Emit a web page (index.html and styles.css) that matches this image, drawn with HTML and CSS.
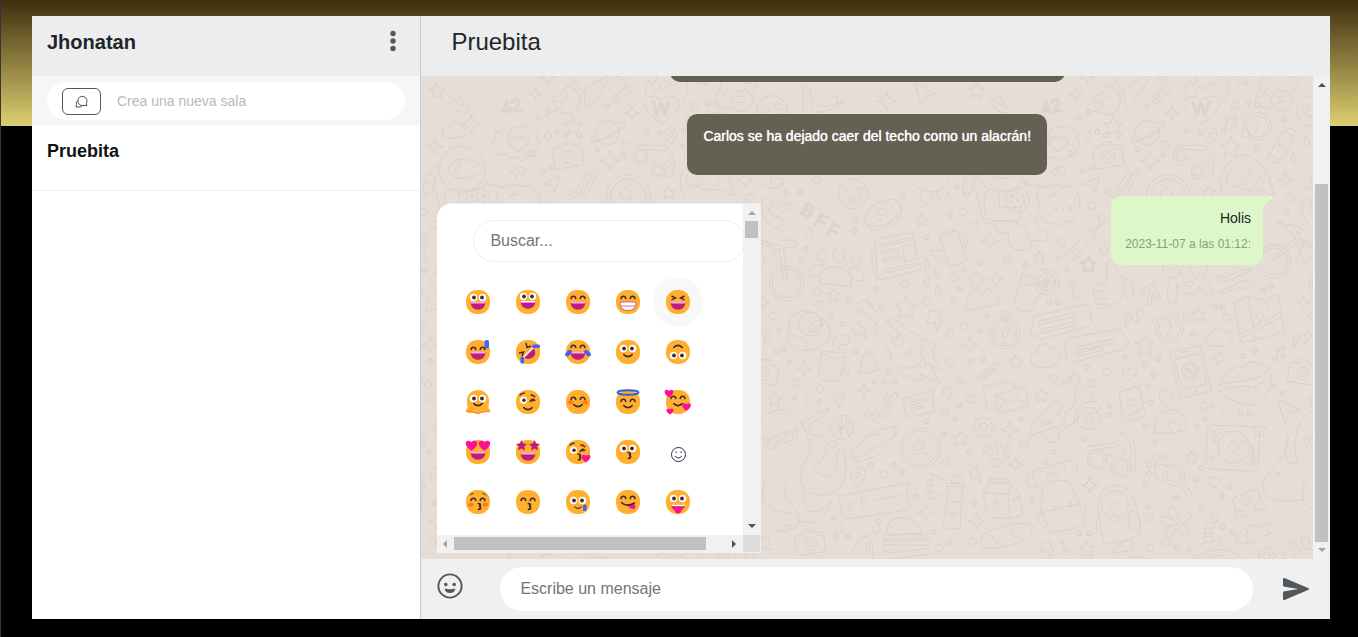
FILE: index.html
```html
<!DOCTYPE html>
<html lang="es">
<head>
<meta charset="utf-8">
<title>Pruebita</title>
<link rel="stylesheet" href="styles.css">
</head>
<body>
<svg class="defs" aria-hidden="true">
  <defs>
    <rect id="face" width="24" height="24" rx="11" fill="#ffb02e"/>
    <g id="eyes"><circle cx="7.5" cy="7.5" r="3.7" fill="#fff"/><circle cx="16.5" cy="7.5" r="3.7" fill="#fff"/><circle cx="8" cy="7.5" r="1.9" fill="#402a32"/><circle cx="16" cy="7.5" r="1.9" fill="#402a32"/></g>
    <g id="arcs" fill="none" stroke="#402a32" stroke-width="1.5" stroke-linecap="round"><path d="M5 8.6C5.4 5.4 9.4 5.4 9.8 8.6M14.2 8.6C14.6 5.4 18.6 5.4 19 8.6"/></g>
    <g id="laugh"><path d="M4.6 11.8H19.4C19.4 17 16.4 19.8 12 19.8S4.6 17 4.6 11.8Z" fill="#bb1d80"/><path d="M4.6 11.6H19.4V12.6Q19.2 13.4 18.4 13.4H5.6Q4.8 13.4 4.6 12.6Z" fill="#ffb5d5"/></g>
    <path id="smile" d="M7.8 14.6Q12 18.6 16.2 14.6" fill="none" stroke="#402a32" stroke-width="1.5" stroke-linecap="round"/>
    <path id="kiss" d="M12.4 12.6C14.8 12.4 14.8 15 13 15.2C15.2 15.4 15 18.4 12.6 18.4" fill="none" stroke="#402a32" stroke-width="1.8" stroke-linecap="round"/>
    <path id="heart" d="M0 4.4C-7 .2-4.6-5.6 0-2.2C4.6-5.6 7 .2 0 4.4Z" fill="#ff0f97"/>
    <path id="star5" d="M0-5.6L1.7-1.9 5.6-1.6 2.7 1.1 3.6 5 0 3-3.6 5-2.7 1.1-5.6-1.6-1.7-1.9Z" fill="#bb1d80"/>
    <g id="blush" fill="#ff7a1f"><ellipse cx="4.8" cy="12.2" rx="2.8" ry="2"/><ellipse cx="19.2" cy="12.2" rx="2.8" ry="2"/></g>
    <g id="wink"><circle cx="7.5" cy="10.2" r="3.6" fill="#fff"/><circle cx="8" cy="10.2" r="1.8" fill="#402a32"/><path d="M14.2 11.6Q16.2 7.6 18.8 10.4L15.8 10.8M4 5.2Q5.8 2.8 8.4 3.2M15 5Q17 4.8 18.8 6.8" fill="none" stroke="#402a32" stroke-width="1.3" stroke-linecap="round" stroke-linejoin="round"/></g>

    <g class="stamps">
    <path id="st" d="M0-18L6-6 18-5 9 4 12 17 0 11-12 17-9 4-18-5-6-6Z"/>
    <path id="sp" d="M0-26Q3-3 28 0Q3 3 0 26Q-3 3-28 0Q-3-3 0-26Z"/>
    <path id="ht" d="M0 18C-32-2-20-26 0-10C20-26 32-2 0 18Z"/>
    <path id="cl" d="M-30 22C-50 10-36-10-26-8C-22-36 12-34 16-18C36-28 48-2 34 10C24 28-20 26-30 22Z"/>
    <path id="bolt" d="M-12-24L14-28 8-8 20-8 4 28 2 4-18 4Z"/>
    <path id="pin" d="M0 22C-28-8-14-24 0-24S28-8 0 22ZM6-6A6 6 0 1 1-6-6A6 6 0 1 1 6-6"/>
    <g id="gear"><path d="M-6-32H6L9-23 19-29 27-20 22-11 32-6V6L23 9 28 20 19 28 10 22 6 32H-6L-9 23-19 28-28 19-22 9-32 6V-6L-22-9-28-19-19-28-9-23Z"/><circle r="12"/></g>
    <g id="cam" transform="rotate(-8)"><path d="M-36-24H-18L-14-36H14L18-24H38Q44-24 44-18V30Q44 36 38 36H-38Q-44 36-44 30V-18Q-44-24-36-24Z"/><circle cy="6" r="19"/><circle cy="6" r="9"/><path d="M26-14H36M-8-28H8"/></g>
    <g id="camb" transform="rotate(8)"><path d="M-36-24H-18L-14-36H14L18-24H38Q44-24 44-18V30Q44 36 38 36H-38Q-44 36-44 30V-18Q-44-24-36-24Z"/><circle cy="6" r="19"/><circle cy="6" r="9"/></g>
    <path id="quote" d="M0 0A10 10 0 1 1 12 8Q12 22-4 28Q4 18 2 10A10 10 0 0 1 0 0"/>
    <path id="checks" d="M-48 22L-36 14-18 28 22-38 34-32-14 42ZM8 26L46-44 56-38 14 36 4 30"/>
    <path id="note" d="M-8 16V-14L16-22V10M-8-6L16-14M-8 16A6 6 0 1 1-20 18A6 6 0 0 1-8 16M16 10A6 6 0 1 1 4 12A6 6 0 0 1 16 10"/>
    <path id="plane" d="M-26-28L38 4 12 10-4 34Z"/>
    </g>

    <g id="tile">
      <g transform="translate(339 104) scale(.3333)">
        <circle cx="280" cy="42" r="45"/><use href="#ht" transform="translate(260 42) scale(.6)"/><use href="#ht" transform="translate(300 34) scale(.6)"/><path d="M266 60Q284 52 302 52Q296 78 266 60"/>
        <g transform="rotate(-28 372 106)"><ellipse cx="372" cy="98" rx="58" ry="34"/><ellipse cx="372" cy="94" rx="17" ry="9"/><path d="M314 100Q316 142 342 134Q356 148 372 136Q390 148 404 134Q428 132 430 100M340 92l6 4M358 78l8-2M392 80l6 4M402 96l6-4M352 112l8 2M380 114l8-2"/></g>
        <path d="M8 58Q20 40 34 60Q40 72 28 82Q24 94 44 110Q58 104 74 126Q68 150 38 142Q-6 110 8 58ZM54 70Q64 60 74 76Q86 64 94 78Q94 90 68 96Q50 86 54 70"/>
        <path d="M345 186Q346 178 356 176L458 158 482 262Q484 270 474 272L362 300Q354 298 352 290ZM345 206L332 216 344 288Q348 298 362 300M362 192L454 172V180L364 200ZM362 214L414 204V212L364 222ZM370 238L420 226V234L372 246ZM376 268L468 250V258L378 278ZM428 200L462 194 468 236 436 246Z"/>
        <path d="M540 170L590 152 622 240Q600 256 570 260ZM540 170Q560 144 590 152M592 160Q616 146 622 176Q622 198 612 206M598 172Q612 166 612 178V194M546 214Q530 214 508 210Q530 246 556 248"/>
        <path d="M500 234Q516 258 500 270Q486 260 500 234M526 266Q546 286 534 294Q518 292 526 266M504 282Q516 308 500 322Q482 312 504 282M532 318Q550 342 536 352Q516 346 532 318"/>
        <circle cx="80" cy="310" r="52"/><circle cx="80" cy="310" r="43"/><path d="M64 180H98Q114 182 108 202H84L70 206 82 300Q78 312 70 304L58 206 0 262M0 188L56 212M0 178L62 198"/>
        <path d="M178 310Q182 258 226 260Q276 260 274 318ZM186 210Q200 216 196 236Q186 250 172 238Q166 216 186 210M238 202Q258 206 254 232Q246 256 224 244Q206 206 238 202M288 226Q304 232 300 252Q286 264 276 250Q272 230 288 226M146 286Q150 250 194 254L176 286ZM268 264Q312 260 314 304L280 300Z"/>
        <path d="M650 276Q670 282 668 306Q656 334 636 322Q616 290 650 276M618 392Q616 342 650 332L662 350 684 326Q712 340 716 372Z"/>
        <path d="M640 0L668 120Q676 136 702 130L706 150Q720 162 746 160Q740 210 780 212Q824 208 816 180Q874 190 864 160Q846 146 832 146Q826 104 812 106M684 30Q668 44 674 84Q676 120 700 122L776 124Q790 108 776 84L718 80V50Q712 22 684 30M690 10Q700 32 746 34Q790 34 806 0M706 124Q730 118 760 126Q804 140 802 170Q810 180 816 188"/>
        <circle cx="773" cy="60" r="36"/><path d="M773 38v1M755 48v1M791 48v1M752 66v1M794 66v1M764 80v1M783 80v1M773 60v1" stroke-width="8"/>
        <path d="M830 40L840 22 866 24 884 12 908 20 930 18 944 34 960 44 958 70 962 90 946 104 938 122 914 128 896 138 872 130 850 126 844 106 830 90 838 68ZM870 50q10-16 22-6q-10 0-22 6M878 86q4-16 12-6q0 14-6 14M910 82q4 8-2 16M930 78q8 6 4 14q-8 2-4-14M860 98q10 2 14 10M898 122l10 2M918 54v1M946 56v8"/>
        <path d="M918 224L986 148 1010 144 1004 168 944 238Q926 238 918 224M932 210L956 232M938 200L964 220M984 150L1004 168"/>
        <path d="M788 278L858 310 812 394Q780 396 762 376ZM782 314H860M798 327v1M814 337v1M804 353v1"/><circle cx="860" cy="306" r="38"/><circle cx="860" cy="306" r="27"/><path d="M860 280V332M834 306H886M842 288L878 324M878 288L842 324"/>
        <circle cx="935" cy="316" r="14"/><circle cx="935" cy="314" r="4"/><path d="M939 330L943 356M932 358L956 352"/>
        <path d="M810 470L822 408 974 374Q986 374 988 384L996 424Q996 434 986 438L836 480 828 466ZM838 424L944 398Q952 404 944 410L840 434ZM844 450L944 424Q952 428 946 436L844 460Z"/>
        <path d="M1070 448Q1082 442 1086 454L1096 474 1108 486 1096 504 1080 510 930 550Q920 548 912 488Q914 480 924 476L1070 448ZM948 502L1058 478Q1066 484 1058 490L950 512ZM948 522L1026 500Q1034 506 1028 512L950 530Z"/>
        <path d="M94 408Q130 380 164 400Q220 430 208 470Q190 518 120 512Q76 500 82 464Q90 458 88 440Q86 420 94 408M84 464Q134 468 142 496Q140 510 120 512"/><circle cx="152" cy="432" r="36"/><path d="M146 452Q150 424 180 418Q192 440 164 456ZM152 452L182 432"/>
        <path d="M220 500Q212 462 250 464Q272 470 268 490Q256 500 250 494Q232 490 240 510"/>
        <path d="M184 520L176 592Q190 608 238 602L256 530Q220 542 184 520Q190 510 250 520Q260 528 256 532M250 550Q268 556 266 572Q258 590 240 582M248 562q10 4 6 12q-6 6-10 2"/>
        <path d="M296 578Q306 556 304 540Q310 520 322 518Q342 526 344 546Q350 566 358 570ZM312 580Q328 586 340 574M312 516Q320 504 328 516"/>
        <path d="M286 376Q300 360 318 362L336 384 424 466 404 482 312 396Q290 392 286 376M356 420Q336 440 350 466Q390 500 394 536Q410 570 450 564Q496 556 480 514Q504 484 466 460Q436 454 424 430Q400 408 376 428M438 520L452 504Q462 508 456 514L444 528ZM484 478Q530 480 528 510L516 508Q520 540 540 570L508 554Q520 580 542 608L480 582L492 602Q430 600 414 566M490 530Q502 552 492 564L470 556M318 360l12 6M330 370l12 8M290 394l10 8M302 402l12 8"/><circle cx="415" cy="484" r="17"/>
        <circle cx="735" cy="460" r="46"/><circle cx="735" cy="460" r="37"/><circle cx="736" cy="408" r="15"/><circle cx="736" cy="408" r="6"/><path d="M748 442L742 466 726 476 728 454ZM735 426v8M735 486v8M702 460h8M760 460h8"/>
        <path d="M656 590L702 550Q722 546 716 562L670 598Q654 602 656 590M668 588L702 562M676 590L706 566"/>
        <path d="M668 628Q666 622 674 620L752 602Q760 602 762 612L764 624M668 628L684 692 712 686M706 646L790 620Q798 618 800 626L804 670Q804 678 796 680L724 700Q716 700 714 692ZM706 646L754 670 790 622M716 692L734 662M774 658L802 676"/>
        <path d="M430 656L520 630 518 658 524 696 446 712Q436 710 430 656M450 668L500 654V662L452 676ZM454 684L492 676V682L456 690Z"/>
        <circle cx="245" cy="742" r="36"/><path d="M216 726L276 758M244 706Q250 742 240 778M222 714Q250 732 240 778M276 724Q250 736 220 770M262 712Q252 750 268 770"/>
        <circle cx="481" cy="805" r="61"/><circle cx="481" cy="805" r="52"/><circle cx="476" cy="795" r="15"/><path d="M446 836Q478 802 522 836"/>
        <path d="M270 810Q312 794 312 772Q320 762 366 748L400 740Q418 742 410 762L346 830Q310 840 292 848Q272 836 270 810M272 822Q292 832 294 846M290 834L400 770Q410 752 400 742M330 768l40-8M350 766v1M372 760v1M392 756v1"/>
        <path d="M688 826L716 822 706 790 718 788 732 814 744 786 752 792 732 826 750 824 748 832 728 834 718 862 704 860 718 838 690 836Z"/>
        <path d="M804 768Q828 700 890 664Q912 664 908 680L890 706Q920 708 912 734L806 768M912 700Q956 690 944 620M960 608Q992 632 1000 664M942 730Q944 670 990 664Q1022 664 1022 688L1006 700Q960 690 942 730L912 746M840 732L874 720Q880 726 872 730L846 738ZM846 762Q860 792 886 788Q904 770 896 744M944 584Q962 582 960 606Q956 626 940 620Q920 600 944 584M930 588L898 612 910 618 948 568"/><circle cx="986" cy="716" r="34"/><circle cx="986" cy="716" r="12"/>
        <path d="M0 726Q30 680 80 690Q126 704 150 790Q156 826 128 850Q116 900 134 930Q166 950 210 944Q254 928 258 870Q256 820 246 800Q228 812 230 850Q222 890 194 890Q170 880 158 864Q196 840 202 800Q198 764 150 762Q142 742 160 724Q196 718 208 684L126 726M132 922Q124 970 146 996Q196 992 212 962Q204 1018 154 1028L120 1024M34 890Q0 906 10 960Q26 998 86 998Q116 1010 114 1034Q90 1056 50 1054Q66 1038 94 1034M78 912Q66 950 90 970Q124 996 118 1030M0 726Q-26 790-8 850Q-58 864-36 764Q-28 806-70 850Q-110 900-114 910Q-114 954-60 964L10 960"/>
        <path d="M12 776L110 746 112 784Q100 798 78 792L64 774Q58 806 32 808Q14 804 12 776M24 780L56 770Q52 804 32 798ZM74 764L102 758Q104 786 86 784Z"/>
        <path d="M238 964Q232 954 242 948L450 908 440 934 450 978Q450 986 442 990L260 1018Q248 1020 246 1012ZM304 956L326 964 308 984ZM340 962L424 946M264 966Q272 956 276 966L278 984Q268 992 266 980ZM262 986Q274 1004 286 984M274 998V1004M406 972L414 976 424 962"/>
        <path d="M382 1064Q374 1020 420 1012Q480 1012 486 1062ZM372 1064L492 1060Q506 1070 490 1074L372 1078ZM370 1084L504 1080Q514 1090 500 1096L372 1094ZM370 1110Q390 1130 416 1112L446 1116 500 1104M372 1140L500 1124M406 1034l6 4M430 1026l6 4M450 1040l6-4M420 1044v1"/>
        <path d="M574 906Q572 884 590 886Q610 884 608 908ZM562 910L616 914V922L558 918ZM566 926L550 1030Q550 1044 566 1046L600 1046 608 926M560 962L606 968M556 996L604 1000M578 966Q584 950 592 966ZM572 1006Q578 984 586 1004ZM560 904L512 880 524 904Q500 894 498 906L520 918Q490 920 494 932L520 936Q496 952 514 958L558 940"/>
        <path d="M670 938L690 908H750L778 940 788 1004 750 1016 690 1012Q676 1004 670 938M688 896H746V908M688 896V908M670 938L744 942 750 1014M744 942L752 910M758 958L776 950V958L758 966ZM706 960Q722 984 708 990Q690 984 706 960"/>
        <path d="M660 1086Q664 1054 720 1042Q790 1020 816 1038Q824 1068 770 1090Q690 1114 666 1102ZM696 1066Q702 1090 716 1088M724 1058Q732 1084 742 1082M750 1040Q752 1070 770 1072M774 1040Q784 1062 792 1062"/>
        <path d="M798 886Q802 876 818 874L930 840Q950 840 952 874L930 890M798 886Q800 920 816 926L842 916M818 874Q818 890 828 916M908 846Q912 860 922 886M862 896Q862 876 880 878Q894 884 892 894"/><path d="M850 920Q880 888 930 906Q950 950 976 1030Q960 1050 870 1056L842 990ZM838 1000L958 970M956 960Q984 968 976 1004L968 1010M844 990Q826 1000 836 1030L856 1044M878 990V980H888V992ZM924 976V968H934V980Z"/>
        <use href="#cam" transform="translate(150 1085)"/><use href="#camb" transform="translate(10 575)"/>
        <path d="M266 1124Q290 1100 296 1078Q320 1056 336 1086L340 1140M310 1068Q322 1056 330 1070M320 1090v24q8 6 10-6v-18q-6-6-10 0"/>
        <path d="M0 10Q30 30 50 24Q80 10 80 0M450 0Q480 40 520 36Q560 26 570 0M484 44Q480 70 500 74Q520 68 514 46M530 34Q530 60 550 62Q570 50 562 30"/>
        <use href="#st" transform="translate(486 120)"/><use href="#st" transform="translate(838 232)"/><use href="#st" transform="translate(984 256) scale(1.3)"/><use href="#st" transform="translate(220 346)"/><use href="#st" transform="translate(438 382) scale(1.8)"/><use href="#st" transform="translate(766 546) scale(1.2)"/><use href="#st" transform="translate(44 658) scale(1.2)"/><use href="#st" transform="translate(844 646) scale(1.1)"/><use href="#st" transform="translate(601 774) scale(1.2)"/><use href="#st" transform="translate(980 1108) scale(1.3)"/>
        <use href="#sp" transform="translate(689 182)"/><use href="#sp" transform="translate(706 298) scale(.9)"/><use href="#sp" transform="translate(630 494) scale(.9)"/><use href="#sp" transform="translate(132 566) scale(.9)"/><use href="#sp" transform="translate(312 630) scale(.7)"/><use href="#sp" transform="translate(750 750)"/><use href="#sp" transform="translate(767 853) scale(.75)"/><use href="#sp" transform="translate(990 916) scale(.9)"/><use href="#sp" transform="translate(496 998) scale(.9)"/><use href="#sp" transform="translate(650 1024) scale(.9)"/><use href="#sp" transform="translate(10 368) scale(.7)"/>
        <use href="#bolt" transform="translate(524 424) scale(1.2)"/><use href="#bolt" transform="translate(300 456) rotate(-30)"/><use href="#bolt" transform="translate(562 642) scale(.75)"/><use href="#bolt" transform="translate(648 888) rotate(-20) scale(.9)"/><use href="#bolt" transform="translate(862 1112)"/>
        <use href="#pin" transform="translate(238 658)"/><use href="#pin" transform="translate(294 892) scale(1.3)"/><use href="#gear" transform="translate(671 741)"/><use href="#checks" transform="translate(358 680)"/><use href="#cl" transform="translate(856 530) scale(1.1 1.3)"/><use href="#quote" transform="translate(14 466)"/><use href="#quote" transform="translate(1016 116)"/>
      </g>
      <g transform="translate(629 174) scale(.3333)">
        <path d="M130 120Q124 104 148 104L166 100Q174 80 168 40Q178 20 192 36Q200 60 216 84L224 100Q230 120 216 140Q210 162 146 178Q136 170 144 160Q130 150 138 144Q126 134 130 120M132 124H168M138 146H168M144 162H174M198 130L224 122M226 90Q246 86 248 100L250 130Q246 146 228 144"/>
        <path d="M274 122L312 98 332 142 322 146 310 122 302 166 290 164 300 122 278 134Z"/>
        <path d="M340 40Q330 70 360 84Q346 140 358 160Q378 168 382 140L380 104Q400 140 436 130L446 110Q470 146 488 134Q486 110 460 86Q480 60 466 40M400 100Q414 92 432 98Q420 124 400 100M360 84Q380 92 398 60M370 60L350 50M414 50L440 90 450 60M380 46l16 30"/>
        <path d="M500 84Q516 72 524 84L570 62Q600 50 606 60L530 94Q510 98 500 84M510 124L560 102Q574 84 590 96L614 92Q620 106 600 108Q582 124 570 112L516 130Z"/>
        <path d="M554 156L594 140 640 150 684 134 704 248 664 256 618 270 574 278ZM594 140L616 268M640 150L658 180M574 252L692 186M580 262L696 198M658 216L694 252M630 218Q608 186 630 186Q650 190 630 218M630 200v1"/>
        <circle cx="358" cy="237" r="42"/><circle cx="358" cy="237" r="32"/><path d="M354 212Q362 206 364 236L350 258M366 190Q378 178 386 192L380 202M308 216Q306 200 322 204"/>
        <g transform="rotate(-14 422 365)"><rect x="374" y="294" width="96" height="142" rx="10"/><rect x="384" y="318" width="76" height="94"/><circle cx="422" cy="363" r="26"/><circle cx="422" cy="363" r="19"/><path d="M412 350Q410 370 434 376L434 366 426 366 418 356ZM410 303H430"/><circle cx="422" cy="424" r="4"/></g>
        <path d="M504 404Q530 360 566 350Q580 354 598 336Q640 336 662 356Q640 384 590 392Q540 396 504 404M508 424Q560 404 610 410Q650 396 664 372Q670 430 620 464Q560 470 508 424M562 376L576 396M592 376L602 392M612 372L614 388M572 432L576 416M596 430V414M620 424L612 410"/>
        <path d="M208 428L268 408 286 498 232 516Q220 512 218 500ZM208 428L254 408 262 420M232 446Q228 466 248 468Q260 460 254 446L244 452ZM238 490L268 478V486L240 496Z"/>
        <path d="M350 420Q372 430 366 452Q354 476 334 460Q316 420 350 420M314 550Q306 484 362 478Q410 484 410 532Q408 552 314 550M374 550Q340 522 360 514Q370 514 374 522Q386 508 394 520Q396 536 374 550"/>
        <path d="M482 526L620 530Q630 532 630 540L624 656Q622 664 612 664L474 656Q466 652 468 640L472 536Q474 526 482 526M492 540L500 560 492 578 486 560ZM580 570L606 590V638M574 576Q580 564 598 584L612 594V638"/><circle cx="551" cy="591" r="48"/><circle cx="551" cy="591" r="16"/><circle cx="487" cy="625" r="7"/><circle cx="606" cy="640" r="8"/>
        <circle cx="141" cy="628" r="30"/><circle cx="141" cy="628" r="22"/><circle cx="212" cy="653" r="30"/><circle cx="212" cy="653" r="22"/><path d="M112 590L196 578 230 606Q230 614 222 614L190 590 116 602M170 620Q184 610 194 628M212 546Q250 550 254 590L256 656 242 660 242 590Q236 560 212 550"/>
        <circle cx="372" cy="674" r="33"/><circle cx="372" cy="674" r="22"/><path d="M390 708L406 700 426 734Q420 744 410 736ZM314 646Q340 640 356 650M314 646Q310 680 326 690L350 690M288 640Q294 626 306 636Q308 650 298 654Q288 652 288 640M308 620Q318 606 328 622Q328 636 318 636ZM336 618Q346 604 354 624Q350 636 340 632ZM292 664Q304 658 306 674Q298 688 288 676Z"/>
        <path d="M144 760Q150 706 196 706Q250 706 260 780L270 830Q276 850 250 864L180 882Q160 882 158 862L144 780ZM250 782Q276 800 272 830Q260 846 238 836L234 800Q238 784 250 782M146 800Q132 820 144 848L156 852M212 876L246 872 248 900 192 910Q184 900 196 892L214 888ZM172 766q8-10 14 0M192 760q8-10 14 0M180 774Q192 786 200 770"/><circle cx="194" cy="764" r="41"/>
        <path d="M372 812Q344 782 362 772Q386 768 384 808Q404 770 424 794Q428 812 392 822Q424 834 412 856Q394 868 378 832Q370 872 346 860Q338 840 368 826Q330 836 330 806Q336 788 372 812M370 810l20 22M390 810l-20 22"/>
        <path d="M546 746L610 718Q622 716 624 726L632 750M546 746L560 794 574 796 580 804 592 790 616 782M570 750L602 738M574 760L606 748M578 768L604 758M614 766L632 752 650 770 634 784 636 774 620 780Z"/>
        <path d="M558 868Q576 824 610 826L630 820 622 832 664 820 648 840 666 852 632 858Q620 880 586 880Q564 880 558 868M596 832Q584 852 594 878M578 858v1"/>
        <path d="M448 892Q450 878 474 876L510 870 516 894M466 874L464 830Q470 812 494 820L494 834 484 838 486 872M466 836L484 834M466 848H484M466 860H484M430 926Q470 894 530 900Q560 906 578 928M470 926Q500 906 530 926M230 926Q260 916 292 926"/>
        <path d="M684 448L752 480 722 486 706 520ZM722 486L706 478"/>
        <use href="#gear" transform="translate(650 918) scale(.8)"/><use href="#cl" transform="translate(507 264)"/><use href="#note" transform="translate(688 310)"/><use href="#ht" transform="translate(238 370) scale(1.1)"/><use href="#ht" transform="translate(492 696)"/><use href="#quote" transform="translate(226 204)"/><use href="#quote" transform="translate(260 190)"/><use href="#quote" transform="translate(730 264)"/>
        <use href="#st" transform="translate(114 46) scale(1.3)"/><use href="#st" transform="translate(446 194) scale(1.2)"/><use href="#st" transform="translate(284 286) scale(1.6)"/><use href="#st" transform="translate(628 540) scale(1.2)"/><use href="#st" transform="translate(424 622) scale(1.1)"/><use href="#sp" transform="translate(508 326) rotate(10) scale(.9)"/><use href="#sp" transform="translate(118 706) scale(.9)"/>
        <path d="M760 890Q748 878 756 862Q776 850 780 876Q774 894 760 890M726 896Q712 880 728 868Q742 874 738 890M700 926Q706 900 736 900M726 926Q750 884 790 900"/>
      </g>
      <g transform="translate(629 0) scale(.3333)">
        <path d="M106 120L124 98 108 108Q116 74 136 76L130 62Q160 60 168 32L180 20 216 62 200 104 180 116 150 108 130 106ZM136 106Q166 54 180 60M170 30Q210 40 214 84M190 10L220 50M226 94L222 40 294 0M226 94Q240 100 246 86L298 10"/>
        <path d="M310 70L350 24Q360 22 354 34M320 84L360 44Q368 42 362 54M308 76Q310 90 334 74M324 56L346 28"/>
        <path d="M456 142C372 96 396 40 456 70C512 40 540 92 456 142M408 56Q400 30 418 14L426 28Q440 20 440 0M430 56L450 30 456 42 480 20 490 30 520 0Q550 40 520 80"/>
        <path d="M616 74L640 0M616 74Q612 84 622 88L664 98M724 58L746 14Q744 6 720 0M630 42L658 62M656 36L632 66M650 0L670 18M706 20l10 4M692 48l8 2M682 62L708 60M682 80L708 76"/><circle cx="696" cy="74" r="32"/>
        <circle cx="292" cy="170" r="36"/><path d="M258 172Q234 190 246 200Q290 196 340 156Q356 134 324 140M256 180Q240 194 262 194Q320 170 334 150"/>
        <use href="#cam" transform="translate(174 236) scale(1 1.05)"/><use href="#note" transform="translate(538 142) scale(1.2)"/><use href="#pin" transform="translate(482 182) scale(1.1)"/>
        <circle cx="622" cy="152" r="42"/><circle cx="622" cy="152" r="32"/><path d="M614 130Q628 140 626 152L614 168M628 108Q638 88 648 104V112M576 126Q570 112 588 112"/>
        <path d="M712 160Q724 152 734 166L728 186Q730 204 714 222L688 258Q672 270 650 248L680 200Q684 176 704 166ZM704 166L730 180M680 200L714 222M658 232L690 254M690 202Q704 204 694 216Q684 212 690 202"/>
        <path d="M378 212Q400 220 412 234Q418 260 394 268Q368 262 370 236ZM384 222Q410 224 406 250Q390 264 380 248ZM412 246Q424 244 432 264Q460 252 464 290Q450 314 432 306Q416 286 432 264M440 270Q462 274 450 298Q430 304 430 284ZM380 208L466 208Q480 220 466 224L404 220M488 232Q498 260 488 300L464 300M480 236Q484 260 460 266M466 280L492 258"/>
        <path d="M510 310Q520 270 550 248Q590 230 600 240L650 282 672 358M528 320Q530 282 560 258M558 330Q526 330 528 310M558 330Q600 356 618 322L650 282M558 324L600 278Q610 278 606 288L570 328Q560 332 558 324M590 350Q620 330 650 352L672 358M510 310Q510 340 524 360"/>
        <circle cx="355" cy="362" r="66"/><circle cx="355" cy="362" r="53"/><circle cx="349" cy="354" r="18"/>
        <path d="M100 324L148 300 134 350 124 328Z"/><use href="#checks" transform="translate(212 324)"/>
        <circle cx="786" cy="105" r="46"/><use href="#ht" transform="translate(766 102) scale(.6)"/><use href="#ht" transform="translate(804 92) scale(.6)"/><path d="M772 122Q786 118 806 112Q800 136 772 122"/>
        <path d="M704 448Q722 440 760 460Q760 476 738 466L750 490 790 510M704 448Q712 470 724 468L740 500 670 554Q662 548 672 542L736 486M740 500L764 560M740 560L760 500"/><circle cx="672" cy="556" r="50"/><circle cx="672" cy="556" r="40"/>
        <path d="M-10 192L0 160 20 152 40 154 56 148 70 162 84 170 80 190 90 206 78 220 76 240 54 240 38 254 20 244 0 246-16 234-36 240-40 220-54 206-44 190-46 170-24 164-14 152M24 222Q-6 206 4 190Q14 182 24 194Q38 178 50 192Q54 206 24 222M24 228Q-16 210 0 182Q14 176 24 186Q42 172 56 190Q60 212 24 228"/>
        <circle cx="-144" cy="280" r="69"/><path d="M-184 280Q-176 248-146 250Q-104 250-82 276Q-100 312-150 306Q-186 306-184 280M-166 284L-152 258Q-146 258-148 268L-158 290ZM-208 266Q-254 280-260 330V350M-204 284Q-230 300-234 350M-226 272l14 18M-244 294l22 12M-256 320l26 6M-82 320Q-20 340 0 324"/>
        <path d="M-200 186Q-212 160-190 154L-180 150Q-170 130-154 142L-150 152Q-132 152-134 164Q-128 180-150 184L-180 188ZM-180 80Q-156 110-140 110Q-120 116-126 96L-170 76M-186 58L-164 70M-150 60l10 26"/>
        <path d="M-740 110V40Q-734 24-720 40L-712 100M-700 90Q-640 92-616 72Q-630 100-700 110M-650 64q10-10 14 2l-6 22"/>
        <use href="#plane" transform="translate(-380 50)"/><use href="#ht" transform="translate(-820 320)"/>
        <use href="#st" transform="translate(-220 44) scale(1.3)"/><use href="#st" transform="translate(190 150) scale(1.5)"/><use href="#st" transform="translate(542 214) scale(1.7)"/><use href="#st" transform="translate(476 350) scale(1.1)"/><use href="#st" transform="translate(578 6) scale(1.2)"/><use href="#st" transform="translate(116 564) scale(1.3)"/>
        <use href="#sp" transform="translate(76 54) scale(.7)"/><use href="#sp" transform="translate(366 110) scale(.75)"/><use href="#sp" transform="translate(300 254) scale(1.1)"/><use href="#sp" transform="translate(18 290) scale(.7)"/><use href="#sp" transform="translate(706 310) scale(.9)"/><use href="#sp" transform="translate(-116 144) scale(1.1)"/><use href="#sp" transform="translate(-226 212) scale(.9)"/><use href="#sp" transform="translate(112 4) scale(.8)"/><use href="#sp" transform="translate(-490 76) scale(1.1)"/>
        <path d="M768 180Q784 196 776 210Q760 208 762 196ZM728 230Q746 248 734 262Q714 260 728 230"/>
      </g>
      <g class="doodle-letters" transform="translate(339 104) scale(.3333)">
        <text x="118" y="100" transform="rotate(28 118 100)">B</text><text x="160" y="132" transform="rotate(28 160 132)">F</text><text x="196" y="160" transform="rotate(28 196 160)">F</text>
        <text x="848" y="-194" transform="rotate(-14 848 -194)">42</text><text x="1296" y="-196">W</text>
      </g>
    </g>
    <path id="dots-l" d="M146 159h0M642 134h0M610 96h0M906 186h0M582 294h0M434 312h0M570 460h0M570 545h0M612 440h0M38 408h0M180 627h0M146 660h0M110 609h0M624 614h0M631 657h0M554 698h0M792 794h0M680 807h0M556 849h0M372 883h0M240 1042h0M350 1047h0M538 1104h0M638 1086h0M880 596h0M994 610h0M995 78h0M1032 210h0M743 237h0M172 334h0M500 364h0M178 374h0M218 793h0M170 1h0M1041 576h0M1064 1016h0M1170 1016h0M1280 413h0M1400 413h0M1330 678h0M1393 707h0M1217 1091h0M1437 1003h0M1170 1104h0M1365 1015h0M1017 -224h0M1205 -312h0M1425 -224h0M984 -132h0M1217 -106h0M1588 54h0M905 -28h0M1590 56h0M994 78h0M-164 -140h0"/>
    <path id="dots-m" d="M284 152h0M138 206h0M124 242h0M500 172h0M570 106h0M590 22h0M620 42h0M266 360h0M350 328h0M600 328h0M580 358h0M660 454h0M668 537h0M600 600h0M632 544h0M58 452h0M246 432h0M214 408h0M286 513h0M384 576h0M104 652h0M178 666h0M500 724h0M596 676h0M586 718h0M784 718h0M550 763h0M628 816h0M332 854h0M402 856h0M426 876h0M470 950h0M222 1012h0M228 1068h0M264 1070h0M356 1024h0M522 1056h0M568 1088h0M644 968h0M816 962h0M894 237h0M922 270h0M868 366h0M894 368h0M796 254h0M612 270h0M662 248h0M682 408h0M364 382h0M120 36h0M78 38h0M286 122h0M428 50h0M404 606h0M374 606h0M344 605h0M88 548h0M72 506h0M50 513h0M982 562h0M974 776h0M882 816h0M858 846h0M956 1060h0M988 1060h0M906 1085h0M916 1110h0M1096 530h0M1154 552h0M1195 536h0M1047 704h0M1164 618h0M1180 584h0M1048 676h0M1156 738h0M1186 787h0M1173 668h0M1298 463h0M1365 380h0M1387 382h0M1357 675h0M1336 718h0M1310 740h0M1186 787h0M1442 698h0M1467 702h0M1324 864h0M1310 898h0M1248 954h0M1163 981h0M1408 920h0M1323 982h0M1385 948h0M1387 1040h0M1418 1057h0M1250 1102h0M1288 1107h0M1155 914h0M1448 528h0M1486 512h0M1537 620h0M1553 884h0M1568 640h0M1512 330h0M1534 318h0M954 -186h0M1012 -144h0M1036 -134h0M1162 -222h0M1190 -250h0M1280 -147h0M1320 -142h0M1132 -92h0M1078 -134h0M994 -38h0M967 -26h0M930 -80h0M1466 -230h0M1492 -224h0M1572 -182h0M1210 -74h0M1490 -96h0M1560 128h0M1580 98h0"/>
  </defs>
</svg>

<div class="app">
  <aside class="sidebar">
    <header class="bar">
      <h2 class="user">Jhonatan</h2>
      <button class="icon-btn" aria-label="Menú"><svg width="24" height="24" fill="#51585c"><circle cx="12" cy="4.500" r="2.700"/><circle cx="12" cy="12" r="2.700"/><circle cx="12" cy="19.500" r="2.700"/></svg></button>
    </header>
    <form class="new-room">
      <div class="new-room-box">
        <button class="room-btn" type="button" aria-label="Crear sala"><svg width="13" height="13" fill="none" stroke="#51585c" stroke-width="1"><path d="M12 10.500H8A4.600 4.600 0 1 1 11.200 8.500ZM2.800 5.500Q.5 7.500 1.500 9.500L1 12H5Q6.500 12 7 10.500"/></svg></button>
        <input class="room-input" type="text" aria-label="Nueva sala" placeholder="Crea una nueva sala">
      </div>
    </form>
    <a class="room" href="#">Pruebita</a>
  </aside>

  <main class="conversation">
    <header class="bar bar-chat"><h1 class="room-title">Pruebita</h1></header>
    <section class="chat">
      <div class="chat-view">
        <svg class="wallpaper" aria-hidden="true">
          <g id="paper">
            <use href="#tile"/>
            <g transform="translate(339 104) scale(.3333)">
              <use href="#dots-l" stroke="#dad1ca" stroke-width="25"/><use href="#dots-l" stroke="#e5ddd6" stroke-width="19"/>
              <use href="#dots-m" stroke="#dad1ca" stroke-width="17"/><use href="#dots-m" stroke="#e5ddd6" stroke-width="10"/>
            </g>
          </g>
          <use href="#paper" x="-540"/><use href="#paper" x="540"/><use href="#paper" x="1080"/>
        </svg>
        <div class="messages">
          <p class="notice notice-prev"></p>
          <p class="notice">Carlos se ha dejado caer del techo como un alacrán!</p>
          <article class="bubble"><p class="bubble-text">Holis</p><time class="bubble-time">2023-11-07 a las 01:12:</time></article>
        </div>
      </div>
      <div class="vscroll"><i class="arrow up"></i><div class="vtrack"><div class="thumb chat-thumb"></div></div><i class="arrow down dim"></i></div>

      <div class="picker">
        <div class="picker-view">
          <input class="picker-search" type="text" aria-label="Buscar emoji" placeholder="Buscar...">
          <div class="emojis">
            <button aria-label="cara sonriente"><svg viewBox="0 0 24 24"><use href="#face"/><use href="#eyes"/><use href="#laugh"/></svg></button>
            <button aria-label="ojos grandes"><svg viewBox="0 0 24 24"><use href="#face"/><use href="#eyes" y="-1"/><use href="#laugh" y="-1"/><path d="M5 11h14v1.300H5z" fill="#fff"/></svg></button>
            <button aria-label="ojos sonrientes"><svg viewBox="0 0 24 24"><use href="#face"/><use href="#arcs"/><use href="#laugh"/></svg></button>
            <button aria-label="radiante"><svg viewBox="0 0 24 24"><use href="#face"/><use href="#arcs"/><path d="M4 12H20Q20 20.500 12 20.500T4 12Z" fill="#fff" stroke="#bb1d80" stroke-width=".6"/><path d="M4.500 16h15" stroke="#d66aa8" stroke-width="1"/></svg></button>
            <button class="hovered" aria-label="risa"><svg viewBox="0 0 24 24"><use href="#face"/><use href="#laugh"/><path d="M5.500 6L9.500 8 5.500 9.800M18.500 6L14.500 8 18.500 9.800" fill="none" stroke="#402a32" stroke-width="1.400"/></svg></button>

            <button aria-label="sudor"><svg viewBox="0 0 24 24"><use href="#face"/><use href="#arcs" y="1"/><use href="#laugh"/><rect x="18.500" y="0" width="4.500" height="8.500" rx="1.800" fill="#4760f5"/></svg></button>
            <button aria-label="por el suelo"><svg viewBox="0 0 24 24"><use href="#face"/><path d="M7.500 17L17 7.500Q21 12 18 16.500Q13 21 7.500 17Z" fill="#bb1d80"/><path d="M7.500 17.500L17.500 7.500" stroke="#fff" stroke-width="1.500"/><path d="M10 3L11 7.500 15 6M3 13L7.500 12 6 16" fill="none" stroke="#402a32" stroke-width="1.500"/><rect x="16" y="4.500" width="8" height="3.600" rx="1.500" fill="#4760f5"/><rect x="4.500" y="16.500" width="3.600" height="7" rx="1.500" fill="#4760f5"/></svg></button>
            <button aria-label="lágrimas de risa"><svg viewBox="0 0 24 24"><use href="#face"/><use href="#arcs" y="-1"/><use href="#laugh"/><path d="M1 14.500L4 11.800M23 14.500L20 11.800" stroke="#4760f5" stroke-width="4" stroke-linecap="round"/></svg></button>
            <button aria-label="sonrisa"><svg viewBox="0 0 24 24"><use href="#face"/><use href="#eyes" y="1"/><use href="#smile"/></svg></button>
            <button aria-label="al revés"><svg viewBox="0 0 24 24"><g transform="rotate(180 12 12)"><use href="#face"/><use href="#eyes" y="1"/><use href="#smile" y="2"/></g></svg></button>

            <button aria-label="derretida"><svg viewBox="0 0 24 24"><path d="M1 12C0-4 24-4 23 12L22.500 18Q26 21 23.500 22Q18 21.500 15 23Q11 25 8 22.500Q3 24 .5 22Q-1 20 1.500 18Z" fill="#ffb02e"/><path d="M0 21.500Q4 20.500 8 22.500Q12 24.500 15 22.500Q20 21 24 21.800" fill="none" stroke="#f08a24"/><use href="#eyes" y="1"/><use href="#smile" y="-1"/></svg></button>
            <button aria-label="guiño"><svg viewBox="0 0 24 24"><use href="#face"/><use href="#wink"/><use href="#smile" y="3"/></svg></button>
            <button aria-label="sonrojada"><svg viewBox="0 0 24 24"><use href="#face"/><use href="#blush"/><use href="#arcs" y="1"/><use href="#smile"/></svg></button>
            <button aria-label="aureola"><svg viewBox="0 0 24 24"><use href="#face"/><ellipse cx="12" cy="2.500" rx="10.500" ry="2.300" fill="none" stroke="#2e5fdc" stroke-width="2"/><use href="#arcs" y="3"/><use href="#smile" y="1"/></svg></button>
            <button aria-label="con corazones"><svg viewBox="0 0 24 24"><use href="#face"/><use href="#arcs"/><use href="#smile" y="-1"/><use href="#heart" x="3" y="3"/><use href="#heart" x="20.500" y="16.500"/><use href="#heart" transform="translate(4 21) scale(.8)"/></svg></button>

            <button aria-label="ojos de corazón"><svg viewBox="0 0 24 24"><use href="#face"/><use href="#laugh"/><use href="#heart" transform="translate(5.500 5) scale(1.300)"/><use href="#heart" transform="translate(18.500 5) scale(1.300)"/></svg></button>
            <button aria-label="ojos de estrella"><svg viewBox="0 0 24 24"><use href="#face"/><use href="#laugh" y="1"/><use href="#star5" x="5.500" y="5.500"/><use href="#star5" x="18.500" y="5.500"/></svg></button>
            <button aria-label="lanzando un beso"><svg viewBox="0 0 24 24"><use href="#face"/><use href="#wink"/><use href="#kiss" y="1.500"/><use href="#heart" x="20" y="18"/></svg></button>
            <button aria-label="besando"><svg viewBox="0 0 24 24"><use href="#face"/><use href="#eyes" y="1"/><use href="#kiss"/></svg></button>
            <button aria-label="sonriente"><svg viewBox="0 0 24 24"><circle cx="12.500" cy="14.500" r="7" fill="#fff" stroke="#263241"/><path d="M10 11.500v1.500M15 11.500v1.500M9 16Q12.500 20 16 16" fill="none" stroke="#263241"/></svg></button>

            <button aria-label="beso sonrojado"><svg viewBox="0 0 24 24"><use href="#face"/><use href="#blush" y="2.500"/><use href="#arcs" y="2"/><path d="M4 5.500Q5 3.500 7.500 3.500M16.500 3.500Q19 3.500 20 5.500" fill="none" stroke="#402a32"/><use href="#kiss" y="1"/></svg></button>
            <button aria-label="beso sonriente"><svg viewBox="0 0 24 24"><use href="#face"/><use href="#arcs" y="2"/><use href="#kiss" y="1"/></svg></button>
            <button aria-label="con lágrima"><svg viewBox="0 0 24 24"><use href="#face"/><use href="#eyes" y="3"/><use href="#smile" transform="translate(3 6) scale(.75)"/><rect x="17" y="14.500" width="3.600" height="6.500" rx="1.500" fill="#4760f5"/></svg></button>
            <button aria-label="deliciosa"><svg viewBox="0 0 24 24"><use href="#face"/><path d="M11.500 15.500L18 13.500Q21 17 18 19Q14 19.500 11.500 15.500Z" fill="#ff0f97"/><use href="#arcs"/><path d="M5.500 12.500Q10 17.500 18.500 13" fill="none" stroke="#402a32" stroke-width="1.500" stroke-linecap="round"/></svg></button>
            <button aria-label="lengua fuera"><svg viewBox="0 0 24 24"><use href="#face"/><use href="#eyes" y="1"/><path d="M5 15.500H19Q18 20.500 12 20.500T5 15.500Z" fill="#bb1d80"/><path d="M7.500 17H16.500L15.500 21Q14 23.500 12 23.500T8.500 21Z" fill="#ff0f97"/><path d="M5.500 15.500h13" stroke="#fff" stroke-width="1.400"/></svg></button>
          </div>
        </div>
        <div class="vscroll"><i class="arrow up dim"></i><div class="vtrack"><div class="thumb picker-thumb"></div></div><i class="arrow down"></i></div>
        <div class="hscroll"><i class="arrow left dim"></i><div class="htrack"><div class="thumb picker-hthumb"></div></div><i class="arrow right"></i></div>
        <div class="corner"></div>
      </div>
    </section>
    <form class="composer">
      <button class="icon-btn emoji-toggle" type="button" aria-label="Emojis"><svg width="28" height="26" fill="#51585c"><circle cx="14" cy="13" r="11.600" fill="none" stroke="#51585c" stroke-width="1.900"/><circle cx="9.800" cy="11.500" r="1.800"/><circle cx="18.200" cy="11.500" r="1.800"/><path d="M8.500 15.500Q14 17 19.500 15.500Q18.500 20 14 20T8.500 15.500Z"/></svg></button>
      <input class="composer-input" type="text" aria-label="Mensaje" placeholder="Escribe un mensaje">
      <button class="icon-btn" type="button" aria-label="Enviar"><svg width="28" height="24" fill="#51585c"><path d="M1 2Q1 .5 2.500 1L26 11Q28.500 12 26 13L2.500 23Q1 23.500 1 22V15.500Q1 14.500 2.500 14.200L16.500 12 2.500 9.800Q1 9.500 1 8.500Z"/></svg></button>
    </form>
  </main>
</div>
</body>
</html>
```
FILE: styles.css
```css
* { box-sizing: border-box; margin: 0; }
body {
  min-height: 100vh;
  display: flex;
  padding: 16px 28px 18px 31px;
  border-left: 1px solid #33363a;
  background: linear-gradient(#3f2e10, #ddd070) 0 0 / 100% 126px no-repeat #000;
  font-family: "Liberation Sans", Arial, sans-serif;
  color: #212529;
}
button { border: 0; background: none; padding: 0; }
input { border: 0; outline: 0; font: inherit; background: none; min-width: 0; }
.defs { position: absolute; width: 0; height: 0; }
.app { flex: 1; display: flex; background: #fff; min-width: 0; }

.sidebar { flex: 0 0 30%; border-right: 1px solid #cbcbcb; }
.bar { height: 60px; display: flex; align-items: flex-start; justify-content: space-between; padding: 13px 15px; background: #ededed; }
.bar-chat { padding: 12px 30px; }
.user { font-size: 20px; line-height: 26px; font-weight: 700; }
.room-title { font-size: 24px; line-height: 28px; font-weight: 400; }
.icon-btn { display: flex; }
.new-room { padding: 6px 15px; background: #f6f6f6; }
.new-room-box { height: 38px; display: flex; align-items: center; gap: 16px; padding: 0 15px; border-radius: 19px; background: #fff; }
.room-btn { width: 39px; height: 27px; display: flex; align-items: center; justify-content: center; border: 1px solid #51585c; border-radius: 6px; }
.room-input { flex: 1; padding: 0; font-size: 14px; }
.room-input::placeholder { color: #b9b9b9; }
.room { display: block; height: 65px; padding: 14px 15px; border-bottom: 1px solid #ededed; font-size: 18px; line-height: 22px; font-weight: 700; color: #111; text-decoration: none; }

.conversation { flex: 1; display: flex; flex-direction: column; min-width: 0; }
.chat { position: relative; flex: 1; display: flex; min-height: 0; }
.chat-view { position: relative; flex: 1; overflow: hidden; background: #e5ddd6; }
.wallpaper { position: absolute; inset: 0; width: 100%; height: 100%; fill: none; stroke: #dad1ca; stroke-width: 3; stroke-linecap: round; stroke-linejoin: round; }
.stamps path, .stamps circle { vector-effect: non-scaling-stroke; stroke-width: 1px; }
.doodle-letters { font: 400 56px "Liberation Sans", Arial, sans-serif; }
.messages { position: absolute; inset: 0; display: flex; flex-direction: column; justify-content: flex-end; align-items: center; padding: 0 50px 294px; }
.notice { flex: none; height: 61px; margin-bottom: 32px; padding: 12px 16px; border-radius: 10px; background: #656054; color: #fff; font-size: 14px; line-height: 20px; text-shadow: 0 0 1px #fff; }
.notice-prev { width: 395px; }
.bubble { position: relative; flex: none; align-self: flex-end; margin-top: -11px; padding: 12px 12px 11px 14px; border-radius: 10px 0 10px 10px; background: #dcf8c8; text-align: right; }
.bubble::after { content: ""; position: absolute; left: 100%; top: 0; border-top: 11px solid #dcf8c8; border-right: 11px solid transparent; }
.bubble-text { margin-bottom: 6px; font-size: 14px; line-height: 20px; }
.bubble-time { display: block; font-size: 12px; line-height: 20px; color: #8b9f80; }

.vscroll { width: 17px; display: flex; flex-direction: column; align-items: center; padding: 7px 0; background: #f1f1f1; }
.hscroll { height: 17px; display: flex; align-items: center; padding: 0 7px 0 6px; background: #f1f1f1; }
.vtrack { flex: 1; display: flex; flex-direction: column; margin: 4px 0; }
.htrack { flex: 1; margin: 0 7px; }
.thumb { background: #c1c1c1; width: 13px; }
.chat-thumb { height: 79%; margin-top: auto; margin-bottom: 2px; }
.picker-thumb { height: 17px; margin-top: 2px; }
.picker-hthumb { width: 252px; height: 13px; }
.arrow { border: 4px solid transparent; width: 0; height: 0; color: #505050; }
.arrow.dim { color: #a3a3a3; }
.arrow.up { border-top: 0; border-bottom-color: currentColor; }
.arrow.down { border-bottom: 0; border-top-color: currentColor; }
.arrow.left { border-left: 0; border-right-color: currentColor; }
.arrow.right { border-right: 0; border-left-color: currentColor; }

.picker { position: absolute; left: 16px; bottom: 6px; width: 324px; height: 350px; display: grid; grid-template: 1fr 17px / 1fr 17px; border: 1px solid #efefef; border-left: 0; border-radius: 15px 0 0 0; overflow: hidden; background: #fff; }
.picker-view { overflow: hidden; padding: 16px 0 0 16px; }
.picker-search { display: block; width: 272px; height: 42px; margin-left: 20px; padding: 0 16px; border: 1px solid #ededed; border-radius: 21px; font-size: 16px; }
.picker-search::placeholder, .composer-input::placeholder { color: #757575; }
.emojis { display: grid; grid-template-columns: repeat(5, 50px); grid-auto-rows: 50px; margin-top: 15px; }
.emojis button { display: grid; place-items: center; border-radius: 50%; }
.emojis svg { width: 24px; height: 24px; overflow: visible; }
.emojis .hovered { background: #f8f8f8; }
.corner { background: #dcdcdc; }

.composer { height: 60px; display: flex; align-items: center; padding: 0 20px 0 15px; background: #f0f0f0; }
.emoji-toggle { padding-bottom: 7px; }
.composer-input { flex: 1; height: 44px; margin: 0 29px 0 36px; padding: 0 20px; border-radius: 22px; background: #fff; font-size: 16px; }
```
